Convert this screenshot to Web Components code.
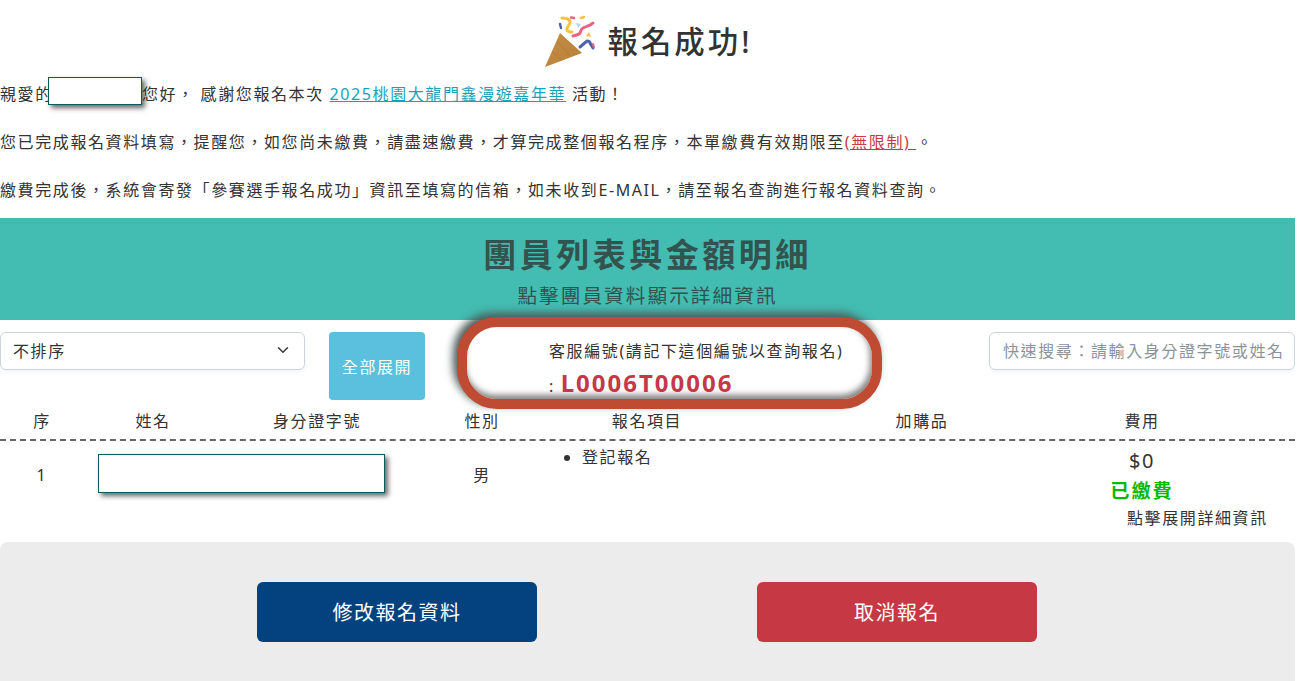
<!DOCTYPE html>
<html lang="zh-Hant">
<head>
<meta charset="utf-8">
<title>報名成功</title>
<style>
    html, body { margin: 0; padding: 0; background: #fff; overflow: hidden; }
    body {
        width: 1295px;
        color: #333;
        font-family: "Noto Sans", "Noto Sans CJK TC", sans-serif;
        font-size: 16px;
        letter-spacing: 1.6px;
    }
</style>
</head>
<body>
<success-title>報名成功!</success-title>
<notice-text></notice-text>
<list-band></list-band>
<list-toolbar></list-toolbar>
<member-table></member-table>
<action-panel></action-panel>

<script>
class SuccessTitle extends HTMLElement{
    constructor(){
        super();
        this.attachShadow({mode: "open"});
        this.shadowRoot.innerHTML = `
        <style>
            :host {
                display: flex;
                justify-content: center;
                align-items: center;
                gap: 10px;
                height: 81px;
                padding: 4px 0 3px 2px;
                box-sizing: border-box;
            }
            svg { width: 53px; height: 53px; flex: none; }
            h1 {
                margin: 2px 0 0 0;
                font-size: 30.4px;
                letter-spacing: 3px;
                font-weight: 500;
                line-height: 44px;
                color: #333;
            }
        </style>
        <svg viewBox="0 0 53 53" aria-hidden="true">
            <defs>
                <linearGradient id="cone" x1="0" y1="0" x2="1" y2="1">
                    <stop offset="0" stop-color="#c48d48"/>
                    <stop offset="1" stop-color="#b97f38"/>
                </linearGradient>
            </defs>
            <path d="M15 18 L0 52 L37 38 Z" fill="url(#cone)"/>
            <path d="M12 26 L25 41 M7 36 L17 46" stroke="#a86f2c" stroke-width="1" opacity=".4"/>
            <path d="M17 3 C22 3 26 5 25 8 C24 11 21 13 22 15 C23 17 25 17 27 17" fill="none" stroke="#f5c242" stroke-width="3" stroke-linecap="round"/>
            <path d="M28 21 C31 20 34 20 35 18 C36 15 36 14 38 13 C42 11 45 11 48 8" fill="none" stroke="#e8637f" stroke-width="3" stroke-linecap="round"/>
            <path d="M35 32 L42 26 C44 26 45 27 45 28 L48 33" fill="none" stroke="#4f63ad" stroke-width="3" stroke-linecap="round"/>
            <path d="M15 9 L16 13" stroke="#4f63ad" stroke-width="2.5" stroke-linecap="round"/>
            <path d="M26 2.5 L29 3" stroke="#e8637f" stroke-width="2.5" stroke-linecap="round"/>
            <path d="M36 3 L39 2" stroke="#f5c242" stroke-width="2.5" stroke-linecap="round"/>
            <path d="M31 8 L36 9 L33 13 Z" fill="#b8d4f0"/>
            <path d="M41 21 L44 17 L46 22 Z" fill="#f5c242"/>
            <path d="M48 29 L49 32" stroke="#e8637f" stroke-width="2" stroke-linecap="round"/>
        </svg>
        <h1><slot></slot></h1>
        `;
    }
}

class NoticeText extends HTMLElement{
    constructor(){
        super();
        this.attachShadow({mode: "open"});
        this.shadowRoot.innerHTML = `
        <style>
            :host { display: block; height: 137px; }
            p {
                margin: 0 0 24px 0;
                line-height: 26px;
                height: 24px;
                white-space: nowrap;
            }
            input {
                box-sizing: border-box;
                width: 94px;
                height: 28px;
                margin: -10px 0 0 -4.8px;
                padding: 0;
                vertical-align: middle;
                background: #fff;
                border: 1px solid #0c5a62;
                border-radius: 0;
                box-shadow: 3px 3px 5px #666;
            }
            .event { color: #17a2b8; text-decoration: underline; }
            .limit { color: #c73845; text-decoration: underline; }
        </style>
        <p>親愛的<input type="text" aria-label="姓名">您好， 感謝您報名本次 <a class="event">2025桃園大龍門鑫漫遊嘉年華</a> 活動！</p>
        <p>您已完成報名資料填寫，提醒您，如您尚未繳費，請盡速繳費，才算完成整個報名程序，本單繳費有效期限至<a class="limit">(無限制) </a>。</p>
        <p>繳費完成後，系統會寄發「參賽選手報名成功」資訊至填寫的信箱，如未收到E-MAIL，請至報名查詢進行報名資料查詢。</p>
        `;
    }
}

class ListBand extends HTMLElement{
    constructor(){
        super();
        this.attachShadow({mode: "open"});
        this.shadowRoot.innerHTML = `
        <style>
            :host {
                display: block;
                height: 102px;
                background: #43bcb1;
                text-align: center;
                color: #33534f;
            }
            h2 { margin: 0; padding-top: 13px; font-size: 33px; letter-spacing: 3.5px; line-height: 48px; font-weight: 700; }
            p { margin: 0; font-size: 19.7px; letter-spacing: 2px; line-height: 28px; padding-top: 3px; }
        </style>
        <h2>團員列表與金額明細</h2>
        <p>點擊團員資料顯示詳細資訊</p>
        `;
    }
}

class ListToolbar extends HTMLElement{
    constructor(){
        super();
        this.attachShadow({mode: "open"});
        this.shadowRoot.innerHTML = `
        <style>
            :host {
                display: flex;
                align-items: flex-start;
                padding-top: 12px;
                height: 88px;
                box-sizing: border-box;
            }
            .sort, .search {
                box-sizing: border-box;
                height: 38px;
                padding-bottom: 2px;
                background: #fff;
                border: 1px solid #ced4da;
                border-radius: 6px;
                box-shadow: 0 2px 4px rgba(0,0,0,.05);
                display: flex;
                align-items: center;
            }
            .sort {
                width: 305px;
                padding-left: 12px;
                padding-right: 15px;
                justify-content: space-between;
            }
            .sort svg { width: 12px; height: 12px; }
            .expand {
                box-sizing: border-box;
                width: 96px;
                height: 68px;
                margin-left: 24px;
                background: #5bc0de;
                border-radius: 4px;
                color: #fff;
                display: flex;
                align-items: center;
                justify-content: center;
            }
            .code-box {
                box-sizing: border-box;
                width: 425px;
                height: 92px;
                margin: -15px 0 0 32px;
                padding: 8px 0 0 82px;
                background: #fff;
                border: 10px solid #bf4b33;
                border-radius: 40px;
                box-shadow: -4px -4px 8px #4b5a58, inset -2px -4px 6px rgba(0,0,0,.5);
                position: relative;
                line-height: 32px;
                white-space: nowrap;
            }
            .code-box div { height: 32px; }
            .code { font-size: 24px; letter-spacing: 2px; font-weight: 700; color: #c73845; }
            .search {
                width: 306px;
                margin-left: auto;
                padding-left: 13px;
                padding-right: 10px;
                color: #8a939b;
                white-space: nowrap;
            }
        </style>
        <div class="sort">
            <span>不排序</span>
            <svg viewBox="0 0 16 16"><path d="M2 5l6 6 6-6" fill="none" stroke="#343a40" stroke-width="2" stroke-linecap="round" stroke-linejoin="round"/></svg>
        </div>
        <div class="expand">全部展開</div>
        <div class="code-box">
            <div>客服編號(請記下這個編號以查詢報名)</div>
            <div>: <span class="code">L0006T00006</span></div>
        </div>
        <div class="search">快速搜尋：請輸入身分證字號或姓名</div>
        `;
    }
}

class MemberTable extends HTMLElement{
    constructor(){
        super();
        this.attachShadow({mode: "open"});
        this.shadowRoot.innerHTML = `
        <style>
            :host { display: block; height: 134px; }
            .row {
                display: grid;
                grid-template-columns: 84px 138px 190px 140px 190px 360px 80px 1fr;
            }
            .head {
                height: 31px;
                line-height: 26px;
                text-align: center;
                border-bottom: 2px dashed #666;
            }
            .head span { display: block; }
            .body { padding-top: 13px; }
            .no, .sex { text-align: center; padding-top: 9px; line-height: 24px; }
            .name-cell { grid-column: 2 / 4; padding-left: 14px; }
            .name {
                box-sizing: border-box;
                width: 287px;
                height: 39px;
                background: #fff;
                border: 1px solid #0c5a62;
                box-shadow: 3px 3px 5px #666;
            }
            ul { margin: -9px 0 0 0; padding: 0 0 0 30px; line-height: 24px; }
            .fee { text-align: center; white-space: nowrap; }
            .price { font-size: 20px; line-height: 28px; margin-top: -7px; }
            .paid { font-size: 19.2px; letter-spacing: 1.9px; font-weight: 700; color: #06b806; line-height: 30px; margin-top: 1px; }
            .hint { text-align: left; margin-left: 25px; line-height: 24px; }
        </style>
        <div class="row head">
            <span>序</span><span>姓名</span><span>身分證字號</span><span>性別</span><span>報名項目</span><span>加購品</span><span>費用</span><span></span>
        </div>
        <div class="row body">
            <div class="no">1</div>
            <div class="name-cell"><div class="name"></div></div>
            <div class="sex">男</div>
            <div><ul><li>登記報名</li></ul></div>
            <div></div>
            <div class="fee">
                <div class="price">$0</div>
                <div class="paid">已繳費</div>
                <div class="hint">點擊展開詳細資訊</div>
            </div>
        </div>
        `;
    }
}

class ActionPanel extends HTMLElement{
    constructor(){
        super();
        this.attachShadow({mode: "open"});
        this.shadowRoot.innerHTML = `
        <style>
            :host {
                display: flex;
                gap: 220px;
                justify-content: center;
                align-items: flex-start;
                box-sizing: border-box;
                height: 139px;
                padding: 40px 1px 0 0;
                background: #ececec;
                border-radius: 8px 8px 0 0;
            }
            div {
                width: 280px;
                height: 60px;
                border-radius: 6px;
                color: #fff;
                font-size: 20px;
                letter-spacing: 1.5px;
                line-height: 62px;
                text-align: center;
            }
            .edit { background: #03427f; }
            .cancel { background: #c73845; }
        </style>
        <div class="edit">修改報名資料</div>
        <div class="cancel">取消報名</div>
        `;
    }
}

customElements.define("success-title", SuccessTitle);
customElements.define("notice-text", NoticeText);
customElements.define("list-band", ListBand);
customElements.define("list-toolbar", ListToolbar);
customElements.define("member-table", MemberTable);
customElements.define("action-panel", ActionPanel);
</script>
</body>
</html>
